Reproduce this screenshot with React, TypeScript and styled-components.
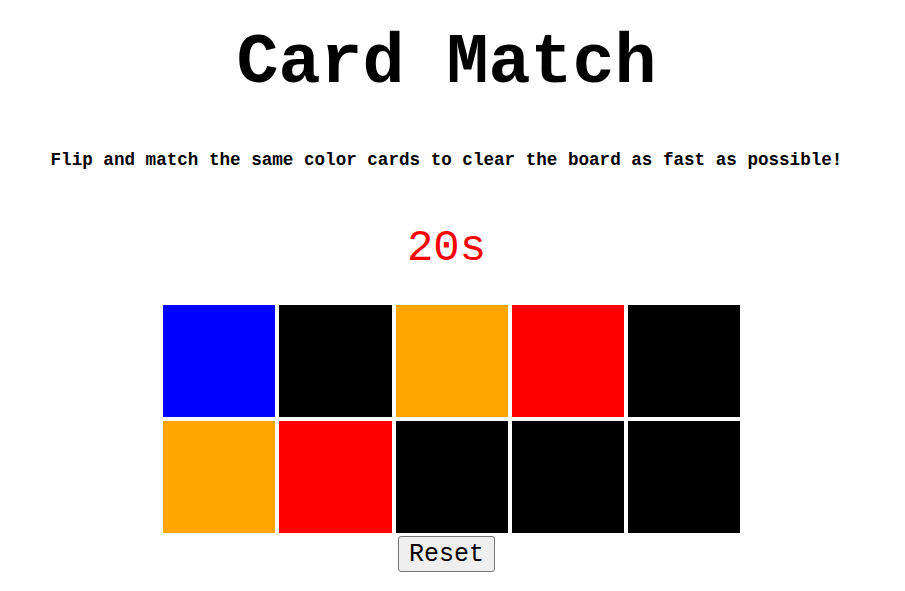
import React, { useState } from "react";
import styled, { createGlobalStyle } from "styled-components";

const Global = createGlobalStyle`
  html, body { margin: 0; padding: 0; background: #ffffff; }
  body { font-family: "Liberation Mono", "Courier New", monospace; color: #000; }
`;

const Page = styled.main`
  width: 893px;
  text-align: center;
`;

const Title = styled.h1`
  margin: 29px 0 0;
  font-size: 70px;
  line-height: 70px;
  font-weight: bold;
`;

const Subtitle = styled.h3`
  margin: 51px 0 0;
  font-size: 17.6px;
  line-height: 20px;
  font-weight: bold;
`;

const Timer = styled.div`
  margin: 53px 0 0;
  font-size: 44px;
  line-height: 50px;
  color: #ff0000;
`;

const Board = styled.div`
  margin: 32px 0 0 163px;
  width: 577.25px;
  display: grid;
  grid-template-columns: repeat(5, 1fr);
  grid-auto-rows: 112px;
  gap: 4px;
`;

const Card = styled.div<{ $color: string }>`
  background: ${(p) => p.$color};
`;

const ResetButton = styled.button`
  margin-top: 3px;
  height: 36px;
  padding: 0 10px;
  font-family: "Liberation Mono", "Courier New", monospace;
  font-size: 25px;
  color: #000;
  background: #efefef;
  border: 1px solid #767676;
  border-radius: 3px;
  cursor: pointer;
`;

const colors = [
  "#0000ff", "#000000", "#ffa500", "#ff0000", "#000000",
  "#ffa500", "#ff0000", "#000000", "#000000", "#000000",
];

export default function App() {
  const [seconds] = useState(20);
  return (
    <>
      <Global />
      <Page>
        <Title>Card Match</Title>
        <Subtitle>Flip and match the same color cards to clear the board as fast as possible!</Subtitle>
        <Timer>{seconds}s</Timer>
        <Board>
          {colors.map((c, i) => (
            <Card key={i} $color={c} />
          ))}
        </Board>
        <ResetButton>Reset</ResetButton>
      </Page>
    </>
  );
}
